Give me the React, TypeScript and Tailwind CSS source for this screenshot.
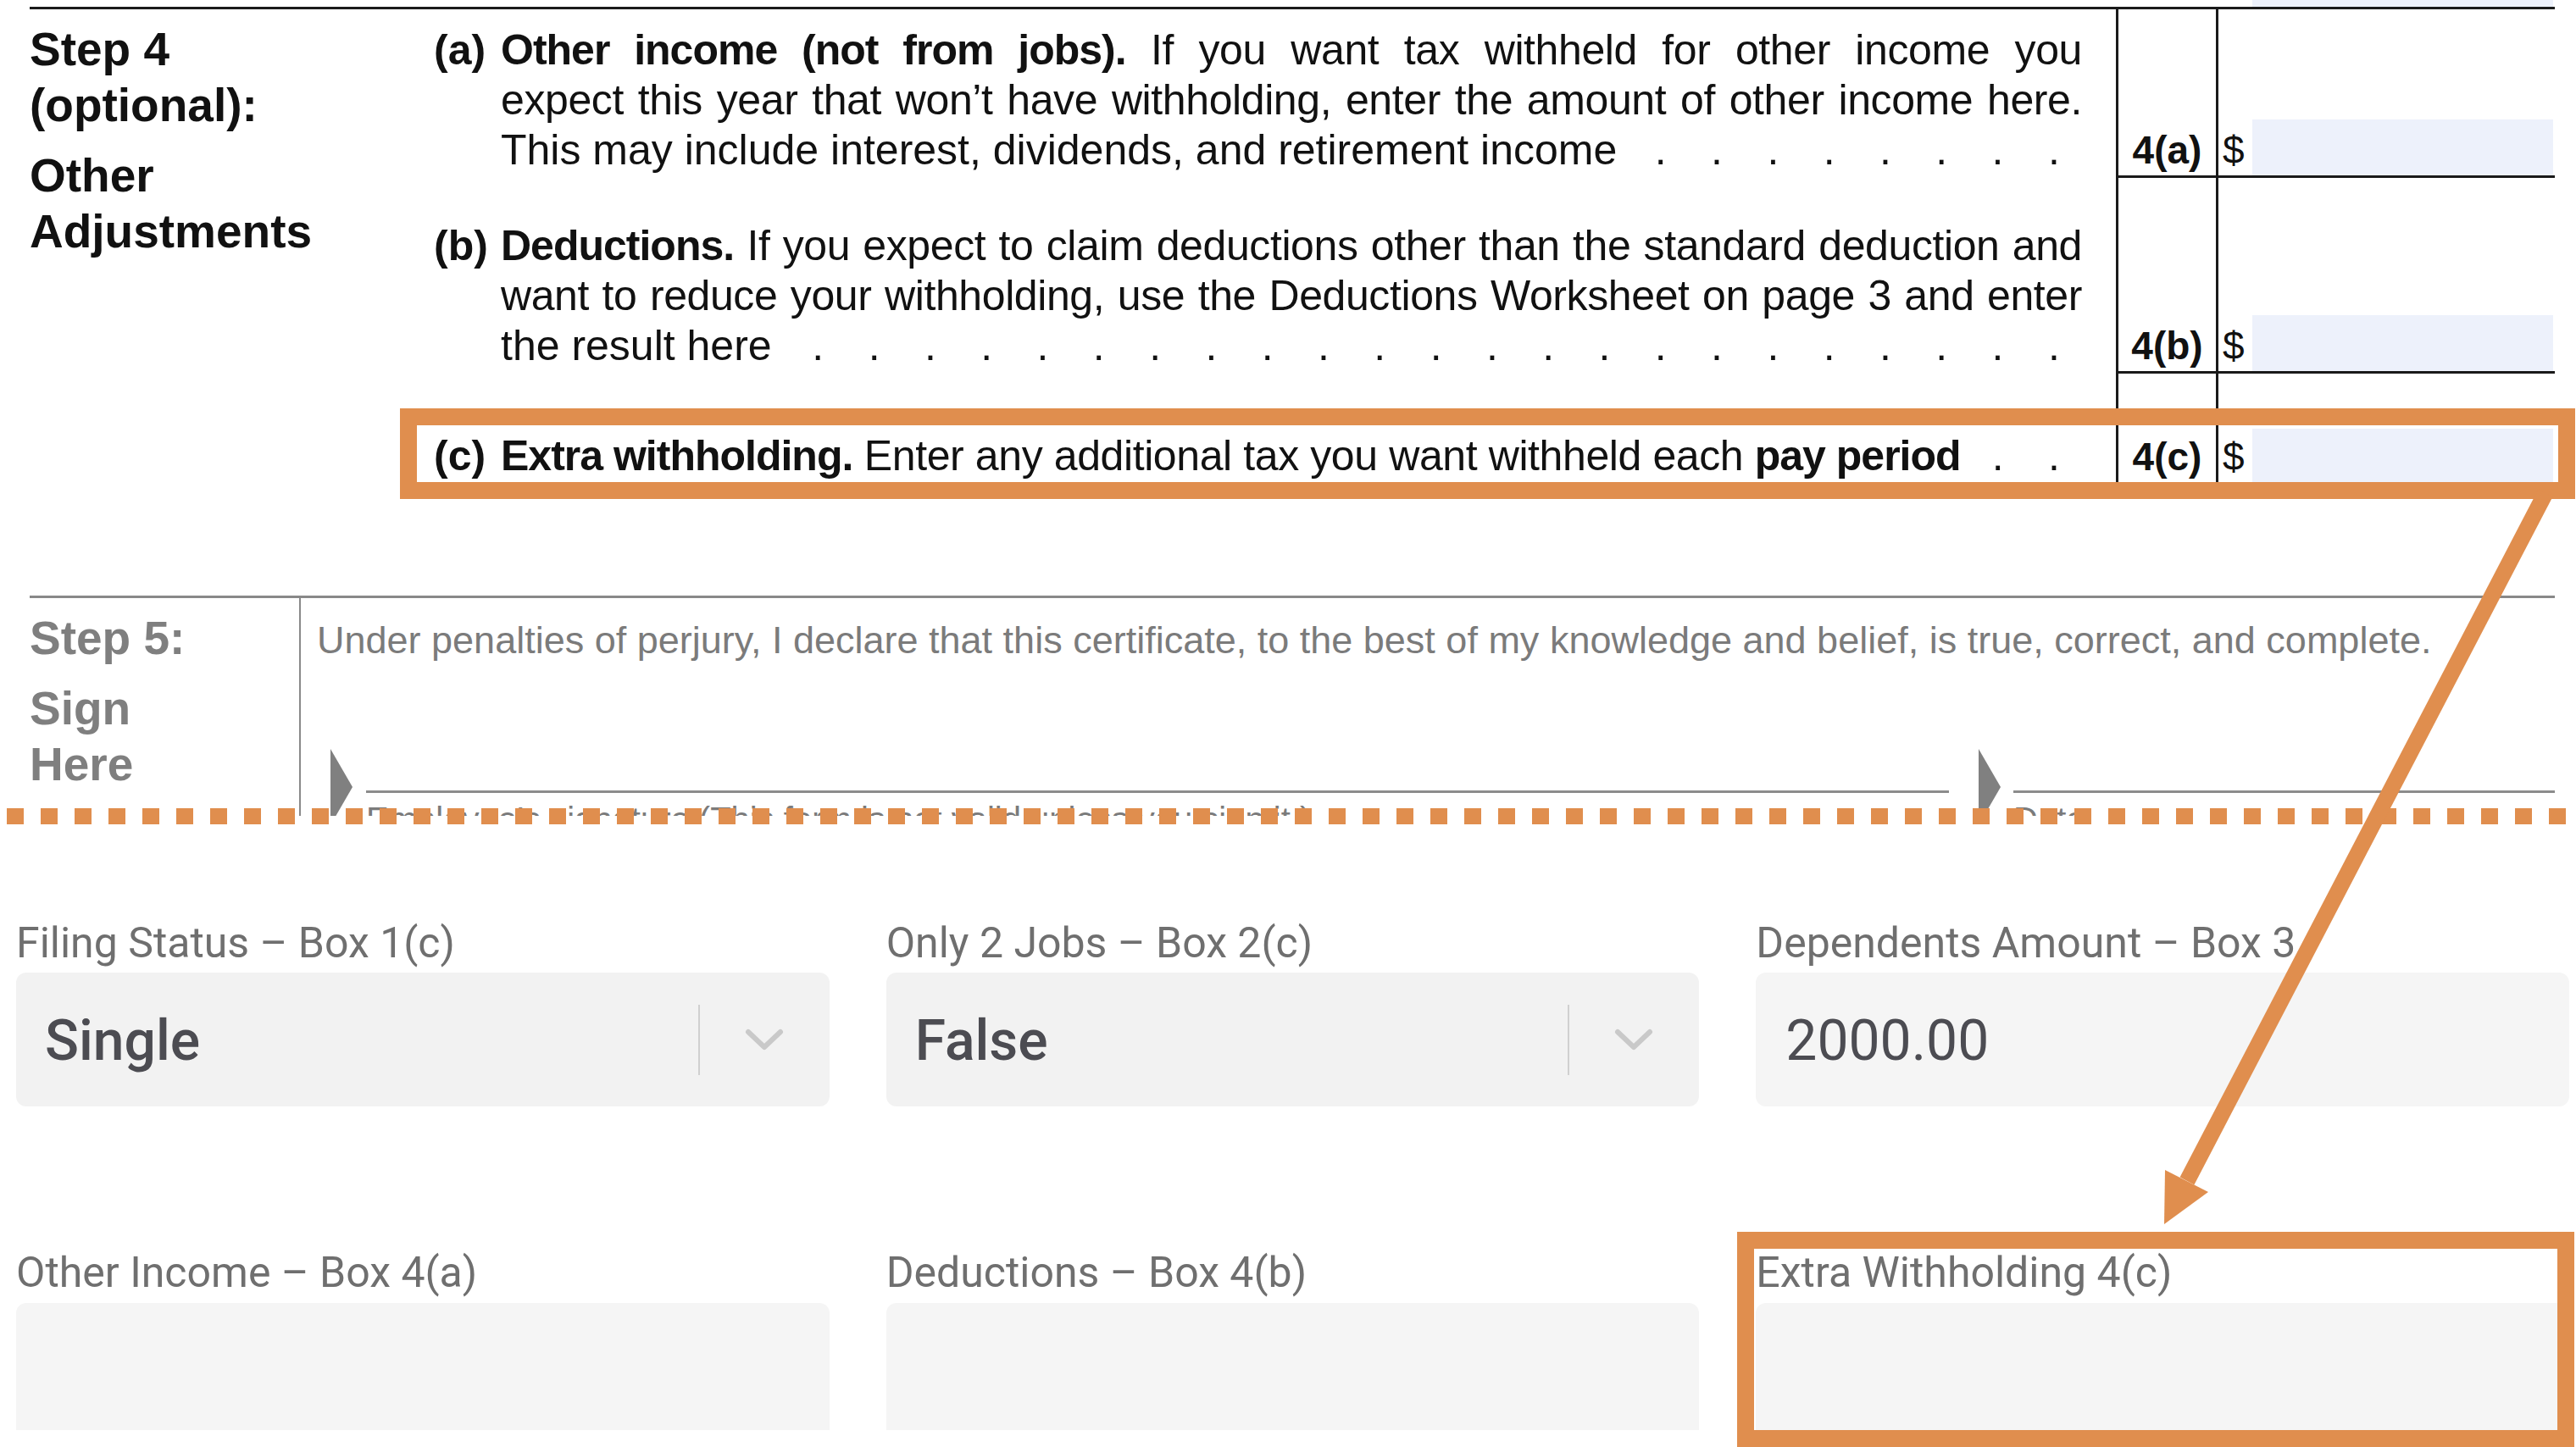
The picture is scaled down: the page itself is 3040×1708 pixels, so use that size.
import React from "react";

const ORANGE = "#e08e4e";

function Dots({ n }: { n: number }) {
  return (
    <span className="flex flex-1 justify-end">
      {Array.from({ length: n }).map((_, i) => (
        <span key={i} className="w-[66.3px] shrink-0 text-center">
          .
        </span>
      ))}
    </span>
  );
}

const J = "text-justify [text-align-last:justify] tracking-[-0.4px]";
const B = "font-bold tracking-[-1px]";

function Chevron() {
  return (
    <svg width="48" height="28" viewBox="0 0 48 28" className="shrink-0">
      <polyline
        points="5,5 24,23 43,5"
        fill="none"
        stroke="#c9c9c9"
        strokeWidth="6"
        strokeLinecap="round"
        strokeLinejoin="round"
      />
    </svg>
  );
}

function SelectBox({ value }: { value: string }) {
  return (
    <div className="mt-[5px] flex h-[158px] items-center rounded-[12px] bg-[#f2f2f2] pl-[34px] pr-[53px]">
      <span className="flex-1 pt-[4px] text-[66px] font-medium leading-[66px] text-[#4c4c52]">{value}</span>
      <div className="h-[83px] w-[2px] shrink-0 bg-[#d0d0d0]" />
      <div className="ml-[52px] flex items-center">
        <Chevron />
      </div>
    </div>
  );
}

function Label({ children }: { children: React.ReactNode }) {
  return <div className="whitespace-nowrap text-[50px] leading-[60px] text-[#6f6f6f]">{children}</div>;
}

export default function App() {
  return (
    <div className="relative h-[1708px] w-[3040px] overflow-hidden bg-white">
      {/* ===== Top: W-4 form excerpt ===== */}
      <div className="relative h-[963px] overflow-hidden text-[#111] [font-family:'Liberation_Sans',Arial,sans-serif]">
        <div className="absolute left-[2658px] top-0 h-[8px] w-[355px] bg-[#edf1fb]" />
        <div className="pl-[35px] pr-[25px] pt-[8px]">
          {/* Step 4 */}
          <div className="flex border-t-[3px] border-[#1a1a1a]">
            <div className="w-[477px] shrink-0 pt-[14px] text-[55px] font-bold leading-[66px]">
              <div>Step 4</div>
              <div>(optional):</div>
              <div className="mt-[17px]">Other</div>
              <div>Adjustments</div>
            </div>
            <div className="flex-1">
              {/* Row (a) */}
              <div className="flex h-[199px]">
                <div className="flex w-[1985px] shrink-0 pr-[40px] pt-[19px] text-[50px] leading-[59px]">
                  <div className="w-[79px] shrink-0 font-bold">(a)</div>
                  <div className="min-w-0 flex-1">
                    <div className={J}>
                      <span className={B}>Other income (not from jobs).</span> If you want tax withheld for other
                      income you
                    </div>
                    <div className={J}>
                      expect this year that won’t have withholding, enter the amount of other income here.
                    </div>
                    <div className="flex whitespace-nowrap">
                      <span>This may include interest, dividends, and retirement income</span>
                      <Dots n={8} />
                    </div>
                  </div>
                </div>
                <div className="flex w-[118px] shrink-0 items-end justify-center border-b-[3px] border-l-[3px] border-[#1a1a1a] pb-[7px] text-[46px] font-bold leading-[46px]">
                  4(a)
                </div>
                <div className="flex flex-1 items-end border-b-[3px] border-l-[3px] border-[#1a1a1a] pl-[5px]">
                  <span className="w-[35px] shrink-0 pb-[7px] text-[46px] leading-[46px]">$</span>
                  <div className="h-[66px] w-[355px] shrink-0 bg-[#edf1fb]" />
                </div>
              </div>

              {/* Row (b) */}
              <div className="flex h-[231px]">
                <div className="flex w-[1985px] shrink-0 pr-[40px] pt-[51px] text-[50px] leading-[59px]">
                  <div className="w-[79px] shrink-0 font-bold">(b)</div>
                  <div className="min-w-0 flex-1">
                    <div className={J}>
                      <span className={B}>Deductions.</span> If you expect to claim deductions other than the
                      standard deduction and
                    </div>
                    <div className={J}>
                      want to reduce your withholding, use the Deductions Worksheet on page 3 and enter
                    </div>
                    <div className="flex whitespace-nowrap">
                      <span>the result here</span>
                      <Dots n={23} />
                    </div>
                  </div>
                </div>
                <div className="flex w-[118px] shrink-0 items-end justify-center border-b-[3px] border-l-[3px] border-[#1a1a1a] pb-[7px] text-[46px] font-bold leading-[46px]">
                  4(b)
                </div>
                <div className="flex flex-1 items-end border-b-[3px] border-l-[3px] border-[#1a1a1a] pl-[5px]">
                  <span className="w-[35px] shrink-0 pb-[7px] text-[46px] leading-[46px]">$</span>
                  <div className="h-[66px] w-[355px] shrink-0 bg-[#edf1fb]" />
                </div>
              </div>

              {/* Row (c) */}
              <div className="flex h-[131px]">
                <div className="flex w-[1985px] shrink-0 pr-[40px] pt-[68px] text-[50px] leading-[59px]">
                  <div className="w-[79px] shrink-0 font-bold">(c)</div>
                  <div className="flex min-w-0 flex-1 whitespace-nowrap tracking-[-0.4px]">
                    <span>
                      <span className={B}>Extra withholding.</span> Enter any additional tax you want withheld each{" "}
                      <span className={B}>pay period</span>
                    </span>
                    <Dots n={2} />
                  </div>
                </div>
                <div className="flex w-[118px] shrink-0 items-end justify-center border-l-[3px] border-[#1a1a1a] pb-[10px] text-[46px] font-bold leading-[46px]">
                  4(c)
                </div>
                <div className="flex flex-1 items-end border-l-[3px] border-[#1a1a1a] pl-[5px]">
                  <span className="w-[35px] shrink-0 pb-[10px] text-[46px] leading-[46px]">$</span>
                  <div className="mb-[2px] h-[64px] w-[355px] shrink-0 bg-[#edf1fb]" />
                </div>
              </div>
            </div>
          </div>

          {/* Step 5 */}
          <div className="mt-[131px] flex border-t-[3px] border-[#888888] text-[#7b7b7b]">
            <div className="h-[300px] w-[320px] shrink-0 border-r-[2px] border-[#8a8a8a] pt-[14px] text-[55px] font-bold leading-[66px] text-[#7f7f7f]">
              <div>Step 5:</div>
              <div className="mt-[17px]">Sign</div>
              <div>Here</div>
            </div>
            <div className="min-w-0 flex-1 pl-[19px] pt-[17px]">
              <div className="whitespace-nowrap text-[45px] leading-[66px]">
                Under penalties of perjury, I declare that this certificate, to the best of my knowledge and belief, is
                true, correct, and complete.
              </div>
              <div className="mt-[95px] flex">
                <svg className="ml-[16px] shrink-0" width="26" height="90" viewBox="0 0 26 90">
                  <polygon points="0,0 26,45 0,90" fill="#808080" />
                </svg>
                <div className="ml-[16px] w-[1868px] shrink-0 pt-[49px]">
                  <div className="border-t-[3px] border-[#8c8c8c]" />
                  <div className="mt-[11px] whitespace-nowrap text-[40px] leading-[40px]">
                    Employee’s signature (This form is not valid unless you sign it.)
                  </div>
                </div>
                <svg className="ml-[35px] shrink-0" width="26" height="90" viewBox="0 0 26 90">
                  <polygon points="0,0 26,45 0,90" fill="#808080" />
                </svg>
                <div className="ml-[15px] min-w-0 flex-1 pt-[49px]">
                  <div className="border-t-[3px] border-[#8c8c8c]" />
                  <div className="mt-[11px] text-[40px] leading-[40px]">Date</div>
                </div>
              </div>
            </div>
          </div>
        </div>
      </div>

      {/* ===== Bottom: app form ===== */}
      <div className="pl-[19px] pr-[8px] pt-[120px] [font-family:Roboto,'Noto_Sans',sans-serif]">
        <div className="grid grid-cols-3 gap-x-[67px] gap-y-[166px]">
          <div>
            <Label>Filing Status – Box 1(c)</Label>
            <SelectBox value="Single" />
          </div>
          <div>
            <Label>Only 2 Jobs – Box 2(c)</Label>
            <SelectBox value="False" />
          </div>
          <div>
            <Label>Dependents Amount – Box 3</Label>
            <div className="mt-[5px] flex h-[158px] items-center rounded-[12px] bg-[#f5f5f5] pl-[35px]">
              <span className="pt-[4px] text-[66px] leading-[66px] text-[#4c4c52]">2000.00</span>
            </div>
          </div>
          <div>
            <Label>Other Income – Box 4(a)</Label>
            <div className="mt-[6px] h-[150px] rounded-t-[12px] bg-[#f5f5f5]" />
          </div>
          <div>
            <Label>Deductions – Box 4(b)</Label>
            <div className="mt-[6px] h-[150px] rounded-t-[12px] bg-[#f5f5f5]" />
          </div>
          <div>
            <Label>Extra Withholding 4(c)</Label>
            <div className="mt-[6px] h-[150px] rounded-t-[12px] bg-[#f5f5f5]" />
          </div>
        </div>
      </div>

      {/* ===== Annotations ===== */}
      <div className="absolute left-[8px] right-0 top-[954px] h-[19px] bg-[repeating-linear-gradient(90deg,#e08e4e_0px,#e08e4e_20px,transparent_20px,transparent_40px)]" />
      <div className="absolute left-[472px] top-[482px] h-[107px] w-[2567px] border-[20px] border-[#e08e4e]" />
      <div className="absolute left-[2050px] top-[1454px] h-[254px] w-[988px] border-[20px] border-[#e08e4e]" />
      <svg className="pointer-events-none absolute left-0 top-0" width="3040" height="1708" viewBox="0 0 3040 1708">
        <line x1="3004" y1="582" x2="2581" y2="1394" stroke={ORANGE} strokeWidth="19" />
        <polygon points="2554,1445 2555,1381 2606,1407" fill={ORANGE} />
      </svg>
    </div>
  );
}
